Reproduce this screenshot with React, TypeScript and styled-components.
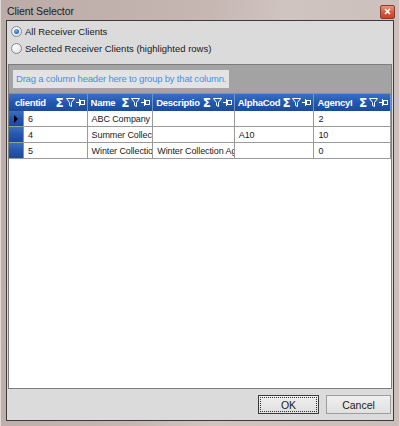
import styled, { createGlobalStyle } from "styled-components";

const GlobalStyle = createGlobalStyle`
  html, body {
    margin: 0;
    padding: 0;
    background: #c9bbb7;
  }
  * {
    box-sizing: border-box;
  }
`;

type Column = { key: string; title: string; width: number };

const columns: Column[] = [
  { key: "clientid", title: "clientid", width: 64 },
  { key: "name", title: "Name", width: 66 },
  { key: "description", title: "Descriptio", width: 82 },
  { key: "alpha", title: "AlphaCod", width: 80 },
  { key: "agency", title: "AgencyI", width: 77 },
];

const rows = [
  { clientid: "6", name: "ABC Company", description: "", alpha: "", agency: "2" },
  { clientid: "4", name: "Summer Collect", description: "", alpha: "A10", agency: "10" },
  { clientid: "5", name: "Winter Collectio", description: "Winter Collection Ag", alpha: "", agency: "0" },
];

const INDICATOR = 15;

const FilterIcon = () => (
  <svg width="9" height="9" viewBox="0 0 9 9">
    <path d="M0.5 0.5 H8.5 L5.5 4.5 V8.5 L3.5 7.5 V4.5 Z" fill="none" stroke="#fff" strokeWidth="1" />
  </svg>
);

const PinIcon = () => (
  <svg width="9" height="7" viewBox="0 0 9 7">
    <path d="M0 3.5 H3 M3.5 0 V7" stroke="#fff" strokeWidth="1" fill="none" />
    <rect x="4.5" y="1.5" width="4" height="4" fill="none" stroke="#fff" strokeWidth="1" />
  </svg>
);

const HeaderIcons = () => (
  <Icons>
    <Sigma>Σ</Sigma>
    <FilterIcon />
    <PinIcon />
  </Icons>
);

export default function App() {
  return (
    <>
      <GlobalStyle />
      <Window>
        <TitleBar>
          <Title>Client Selector</Title>
          <CloseButton>
            <svg width="7" height="7" viewBox="0 0 7 7">
              <path d="M1 1 L6 6 M6 1 L1 6" stroke="#fff" strokeWidth="1.6" />
            </svg>
          </CloseButton>
        </TitleBar>
        <Client>
          <Options>
            <RadioRow>
              <Radio checked />
              <span>All Receiver Clients</span>
            </RadioRow>
            <RadioRow>
              <Radio />
              <span>Selected Receiver Clients (highlighted rows)</span>
            </RadioRow>
          </Options>
          <Grid>
            <GroupPanel>
              <GroupHint>Drag a column header here to group by that column.</GroupHint>
            </GroupPanel>
            <HeaderRow>
              {columns.map((col, i) => (
                <HeaderCell key={col.key} $width={i === 0 ? col.width + INDICATOR : col.width} $first={i === 0}>
                  <HeaderText>{col.title}</HeaderText>
                  <HeaderIcons />
                </HeaderCell>
              ))}
            </HeaderRow>
            <Body>
              {rows.map((row, r) => (
                <DataRow key={r}>
                  <Indicator>{r === 0 && <Pointer />}</Indicator>
                  {columns.map((col) => (
                    <Cell key={col.key} $width={col.width}>
                      {row[col.key as keyof typeof row]}
                    </Cell>
                  ))}
                </DataRow>
              ))}
            </Body>
          </Grid>
          <Footer>
            <Button $default>
              <FocusRect>OK</FocusRect>
            </Button>
            <Button>Cancel</Button>
          </Footer>
        </Client>
      </Window>
    </>
  );
}

const Window = styled.div`
  width: 400px;
  height: 426px;
  display: flex;
  flex-direction: column;
  padding: 0 5px 5px 5px;
  background: linear-gradient(100deg, #bcaba7 0%, #c6b7b3 45%, #d0c4c0 60%, #cbbeba 100%);
  border-left: 1px solid #e2dad8;
  border-right: 1px solid #e2dad8;
  font-family: "Liberation Sans", Arial, sans-serif;
  font-size: 9.5px;
  letter-spacing: -0.2px;
  color: #000;
`;

const TitleBar = styled.div`
  height: 20px;
  display: flex;
  align-items: center;
  justify-content: space-between;
  padding: 0 0 0 1px;
`;

const Title = styled.div`
  font-size: 10.5px;
  letter-spacing: -0.1px;
  color: #1c1c1c;
  padding-top: 1px;
`;

const CloseButton = styled.div`
  width: 15px;
  height: 14px;
  margin-top: 3px;
  margin-right: -1px;
  display: flex;
  align-items: center;
  justify-content: center;
  border: 1px solid #8e3a2e;
  border-radius: 2px;
  background: linear-gradient(#e9957f 0%, #d65b40 50%, #c7432a 100%);
`;

const Client = styled.div`
  flex: 1;
  display: flex;
  flex-direction: column;
  background: #dbdbdb;
  border: 1px solid #3c3c3c;
  padding: 0 1px 0 1px;
`;

const Options = styled.div`
  display: flex;
  flex-direction: column;
  gap: 4px;
  padding: 4px 0 0 3px;
  height: 41px;
`;

const RadioRow = styled.label`
  display: flex;
  align-items: center;
  gap: 3px;
  height: 13px;
  color: #1a1a1a;
  letter-spacing: 0;
`;

const Radio = styled.span<{ checked?: boolean }>`
  width: 11px;
  height: 11px;
  border-radius: 50%;
  border: 1px solid #8a8a8a;
  background: radial-gradient(circle at 40% 35%, #ffffff 0%, #e4e4e4 70%, #cfcfcf 100%);
  position: relative;
  &::after {
    content: "";
    display: ${(p) => (p.checked ? "block" : "none")};
    position: absolute;
    left: 2px;
    top: 2px;
    width: 5px;
    height: 5px;
    border-radius: 50%;
    background: radial-gradient(circle at 40% 35%, #7fb6f0 0%, #2a6fcf 60%, #174f9c 100%);
  }
`;

const Grid = styled.div`
  flex: 1;
  display: flex;
  flex-direction: column;
  border: 1px solid #7d7d7d;
  background: #fff;
  margin-top: 2px;
`;

const GroupPanel = styled.div`
  height: 29px;
  background: #a3a3a3;
  padding: 5px 0 0 4px;
  border-bottom: 1px solid #8e8e8e;
`;

const GroupHint = styled.div`
  display: inline-block;
  height: 18px;
  line-height: 18px;
  padding: 0 3px;
  background: #e3e3e3;
  color: #4d8fd8;
`;

const HeaderRow = styled.div`
  display: flex;
  height: 17px;
  background: linear-gradient(#3a6fc6 0%, #2358b0 50%, #1c4a9a 100%);
`;

const HeaderCell = styled.div<{ $width: number; $first?: boolean }>`
  width: ${(p) => p.$width}px;
  display: flex;
  align-items: center;
  gap: 1px;
  padding: 0 2px 0 ${(p) => (p.$first ? 6 : 3)}px;
  border-right: 1px solid #6e93cf;
  overflow: hidden;
`;

const HeaderText = styled.span`
  flex: 1;
  color: #fff;
  font-weight: bold;
  letter-spacing: -0.3px;
  white-space: nowrap;
  overflow: hidden;
  text-overflow: clip;
`;

const Icons = styled.span`
  display: flex;
  align-items: center;
  gap: 1px;
  flex-shrink: 0;
`;

const Sigma = styled.span`
  color: #fff;
  font-family: "DejaVu Sans", sans-serif;
  font-weight: bold;
  font-size: 12px;
  line-height: 1;
  margin-right: 1px;
`;

const Body = styled.div`
  flex: 1;
  display: flex;
  flex-direction: column;
`;

const DataRow = styled.div`
  display: flex;
  height: 16px;
  border-bottom: 1px solid #9a9a9a;
`;

const Indicator = styled.div`
  width: ${INDICATOR}px;
  display: flex;
  align-items: center;
  justify-content: center;
  background: linear-gradient(#3d6fc0 0%, #2457ad 50%, #1d4996 100%);
  border-right: 1px solid #6e93cf;
`;

const Pointer = styled.span`
  width: 0;
  height: 0;
  border-top: 4px solid transparent;
  border-bottom: 4px solid transparent;
  border-left: 4px solid #000;
`;

const Cell = styled.div<{ $width: number }>`
  width: ${(p) => p.$width}px;
  padding: 0 0 0 4px;
  display: flex;
  align-items: center;
  border-right: 1px solid #9a9a9a;
  white-space: nowrap;
  overflow: hidden;
  font-size: 9px;
  letter-spacing: -0.1px;
  color: #1a1a1a;
`;

const Footer = styled.div`
  height: 31px;
  display: flex;
  align-items: center;
  justify-content: flex-end;
  gap: 7px;
  padding: 0 1px 0 0;
`;

const Button = styled.div<{ $default?: boolean }>`
  width: ${(p) => (p.$default ? 61 : 65)}px;
  height: 19px;
  display: flex;
  align-items: center;
  justify-content: center;
  font-size: 10.5px;
  letter-spacing: 0;
  color: #1a1a1a;
  background: linear-gradient(#efefef, #e0e0e0);
  border: 1px solid ${(p) => (p.$default ? "#3a3a3a" : "#9d9d9d")};
  padding: 1px;
`;

const FocusRect = styled.span`
  flex: 1;
  align-self: stretch;
  display: flex;
  align-items: center;
  justify-content: center;
  border: 1px dotted #333;
`;
